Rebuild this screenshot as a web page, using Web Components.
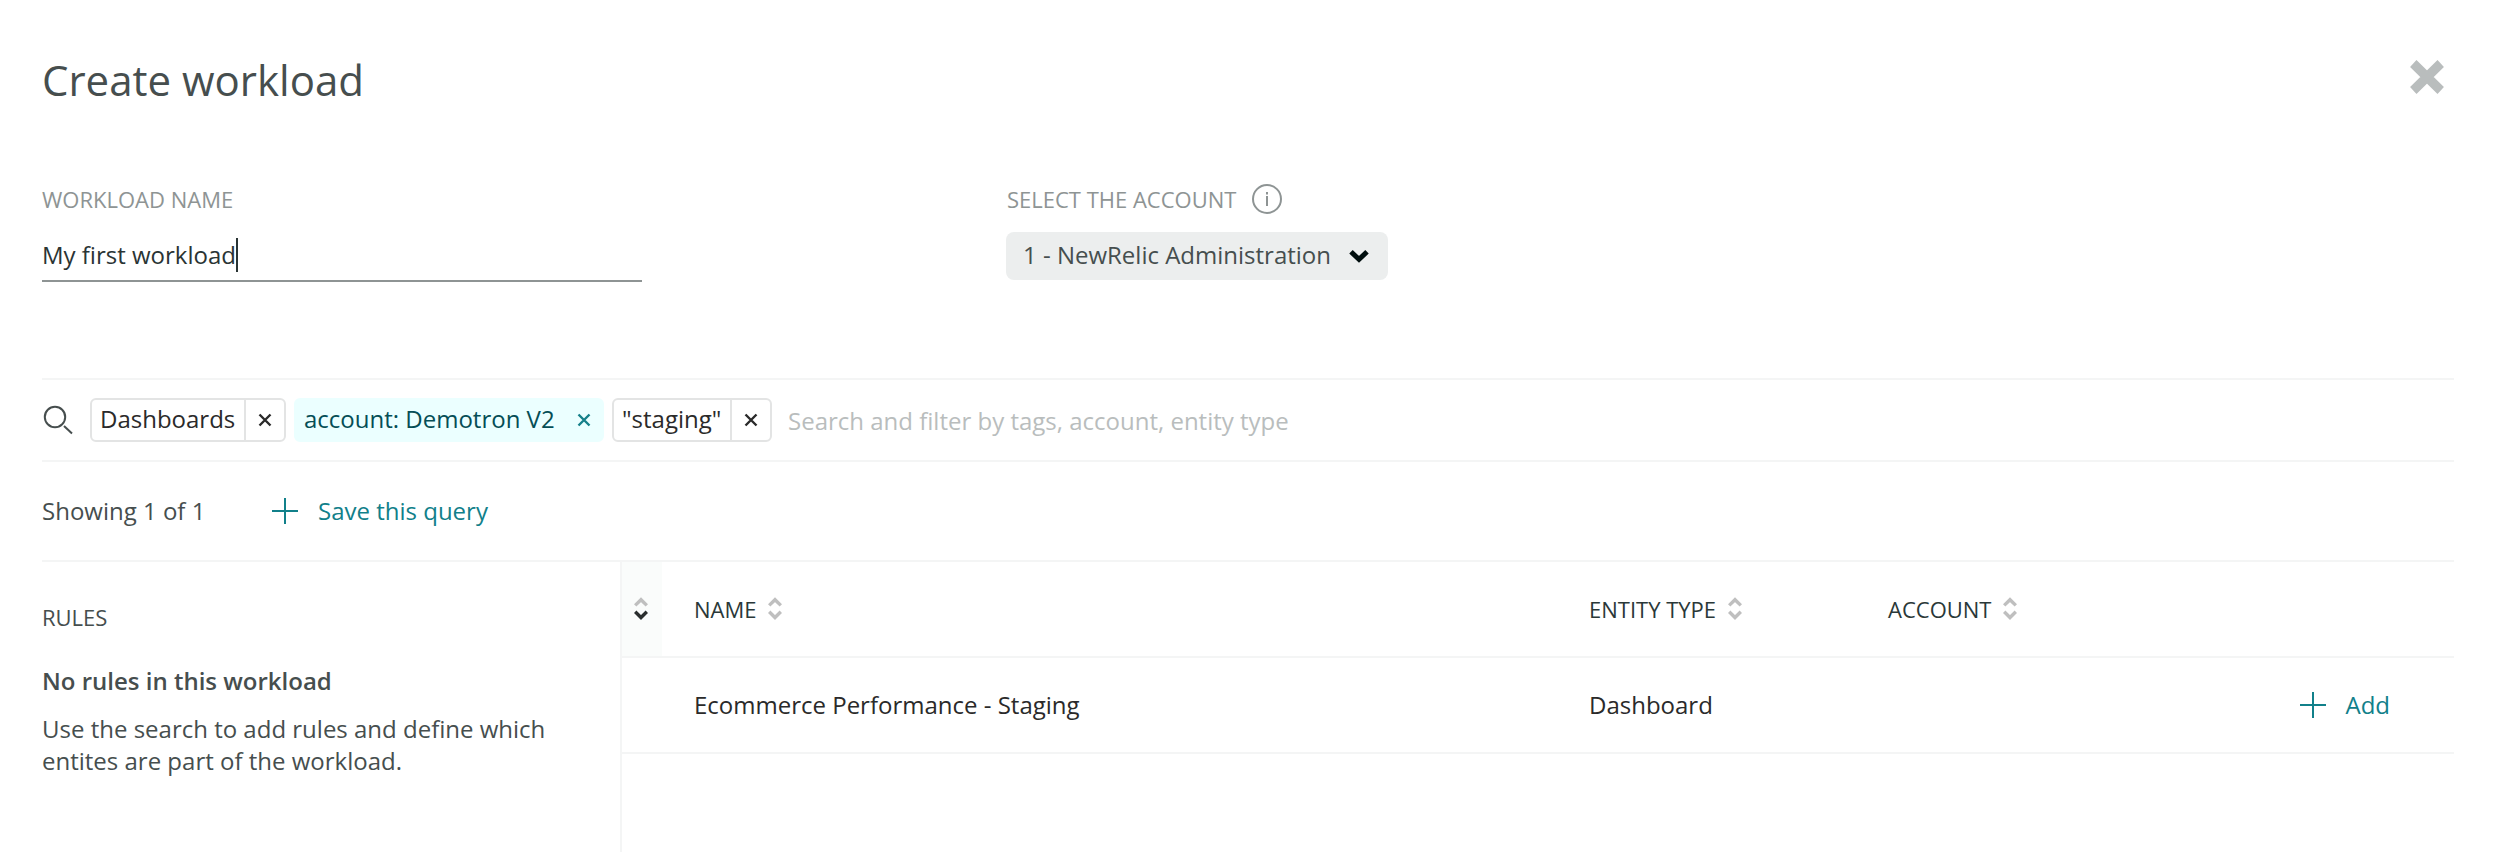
<!DOCTYPE html>
<html lang="en">
<head>
<meta charset="utf-8">
<title>Create workload</title>
<style>
  html, body { margin: 0; height: 100%; background: #fff; }
  body { overflow: hidden; font-family: "Open Sans", "Noto Sans", sans-serif; font-size: 24px; color: #464e4e; }
</style>
</head>
<body>
<workload-dialog></workload-dialog>
<script>
const define = (name, html) => customElements.define(name, class extends HTMLElement {
  constructor() {
    super();
    const t = document.createElement('template');
    t.innerHTML = html;
    this.attachShadow({ mode: 'open' }).append(t.content.cloneNode(true));
  }
});

define('close-icon', `
<style>:host{display:block;width:36px;height:36px}svg{display:block}</style>
<svg width="36" height="36" viewBox="0 0 36 36"><path d="M4 4.5L32 31.5M32 4.5L4 31.5" transform="translate(18 18) scale(.98 1) translate(-18 -18)" stroke="#b9bdbd" stroke-width="9.4"/></svg>`);

define('plus-icon', `
<style>:host{display:block;width:26px;height:26px}svg{display:block}</style>
<svg width="26" height="26"><path d="M13 0V26M0 13H26" stroke="#11808a" stroke-width="2"/></svg>`);

define('info-icon', `
<style>:host{display:block;width:30px;height:30px}svg{display:block}</style>
<svg width="30" height="30" fill="none" stroke="#8e9494"><circle cx="15" cy="15" r="14" stroke-width="2"/><path d="M15 12V22M15 8V10.4" stroke-width="2"/></svg>`);

define('search-icon', `
<style>:host{display:block;width:32px;height:32px}svg{display:block}</style>
<svg width="32" height="32" fill="none" stroke="#464e4e" stroke-width="2"><circle cx="13" cy="13" r="10.2"/><path d="M22 22L30 29.5"/></svg>`);

define('sort-icon', `
<style>:host{display:block;width:14px;height:24px;--down:#bfbfbf}:host([active]){--down:#2a2e2e}svg{display:block}</style>
<svg width="14" height="24" fill="none" stroke-width="3.4"><path d="M1.2 8.4L7 2.7L12.8 8.4" stroke="#bfbfbf"/><path d="M1.2 14.8L7 20.5L12.8 14.8" style="stroke:var(--down)"/></svg>`);

define('field-label', `
<style>:host{display:flex;align-items:center;height:32px;margin:-1px 0 17px;font-size:22px;line-height:32px;color:#8e9494;white-space:nowrap;gap:16px}</style>
<slot></slot>`);

define('text-field', `
<style>:host{display:block}
.box{display:flex;padding:6px 0 8px;border-bottom:2px solid #8e9494;line-height:34px;color:#2a3434}
i{width:2px;height:34px;background:#2a3434}</style>
<field-label><slot name="label"></slot></field-label>
<div class="box"><slot></slot><i></i></div>`);

define('select-field', `
<style>:host{display:block}
field-label{padding-left:1px}
.btn{box-sizing:border-box;width:382px;height:48px;padding:0 18px 3px 17px;border-radius:8px;background:#eceeee;display:flex;align-items:center;justify-content:space-between;white-space:nowrap}
svg{display:block;margin:2px 1px 0 0}</style>
<field-label><slot name="label"></slot><info-icon></info-icon></field-label>
<div class="btn"><slot></slot><svg width="20" height="14" fill="none"><path d="M2 2.8L10 10.4L18 2.8" stroke="#000e0e" stroke-width="5"/></svg></div>`);

define('filter-chip', `
<style>:host{box-sizing:border-box;display:flex;height:44px;border:2px solid #e3e4e4;border-radius:6px;color:#2a2a2a;line-height:40px;white-space:nowrap}
.text{flex:1;padding-left:8px;margin-top:-1px}
.x{width:38px;border-left:2px solid #e3e4e4;display:flex;align-items:center;justify-content:center}
:host([accent]){background:#ebffff;border-color:#ebffff;color:#054e56}
:host([accent]) .x{border-color:transparent;color:#16808a}
svg{display:block}
:host([accent]) svg{margin-left:1px}</style>
<div class="text"><slot></slot></div>
<div class="x"><svg width="14" height="14"><path d="M1.5 1.5L12.5 12.5M12.5 1.5L1.5 12.5" stroke="currentColor" stroke-width="2.4"/></svg></div>`);

define('search-bar', `
<style>:host{box-sizing:border-box;display:flex;align-items:center;height:84px;border:solid #f4f5f5;border-width:2px 0;gap:8px}
search-icon{margin-right:8px}
.hint{margin:0 0 0 8px;color:#b9bdbd;white-space:nowrap}</style>
<search-icon></search-icon><slot></slot><span class="hint">Search and filter by tags, account, entity type</span>`);

define('action-link', `
<style>:host{display:flex;align-items:center;gap:20px;color:#11808a;white-space:nowrap}
:host([slot]){gap:19px}
::slotted(span){margin-top:-2px}</style>
<plus-icon></plus-icon><slot></slot>`);

define('rules-panel', `
<style>:host{box-sizing:border-box;display:block;width:580px;border-right:2px solid #f4f5f5;padding-top:39px}
h2,h3,p{margin:0;line-height:32px}
h2{font-size:22px;font-weight:400}
h3{font-size:24px;font-weight:600;margin:32px 0 16px}
p{width:520px}</style>
<h2><slot name="title"></slot></h2><h3><slot name="heading"></slot></h3><p><slot></slot></p>`);

define('entity-row', `
<style>:host{display:grid;grid-template-columns:40px 927px 299px 1fr auto;height:94px;border-bottom:2px solid #f4f5f5;align-items:center;color:#2a2a2a;white-space:nowrap}
:host([header]){font-size:22px;color:#2a3838}
:host(:not([header])) .c{margin-top:-2px}
.s{box-sizing:border-box;padding-right:2px;align-self:stretch;display:flex;align-items:center;justify-content:center}
:host([header]) .s{background:#fafcfb}
.c{display:flex;align-items:center;gap:12px}
.n{padding-left:32px}
.end{padding-right:64px}</style>
<div class="s"><slot name="sort"></slot></div><div class="c n"><slot name="name"></slot></div><div class="c"><slot name="type"></slot></div><div class="c"><slot name="account"></slot></div><div class="end"><slot name="action"></slot></div>`);

define('workload-dialog', `
<style>:host{display:block;padding:50px 42px 0}
header{display:flex;justify-content:space-between;height:134px}
h1{margin:0;font-size:42px;line-height:60px;font-weight:400;white-space:nowrap}
close-icon{margin:9px 9px 0 0}
.fields{display:grid;grid-template-columns:600px 382px;column-gap:364px;margin-bottom:96px;align-items:start}
.tools{display:flex;align-items:center;height:98px;border-bottom:2px solid #f4f5f5}
.count{width:230px;margin-top:-2px;white-space:nowrap}
.main{display:flex;height:290px}
.table{flex:1}
.h{display:flex;align-items:center;gap:12px}</style>
<header><h1>Create workload</h1><close-icon></close-icon></header>
<section class="fields">
  <text-field><span slot="label">WORKLOAD NAME</span><span>My first workload</span></text-field>
  <select-field><span slot="label">SELECT THE ACCOUNT</span><span>1 - NewRelic Administration</span></select-field>
</section>
<search-bar>
  <filter-chip style="width:196px">Dashboards</filter-chip>
  <filter-chip accent style="width:310px">account: Demotron V2</filter-chip>
  <filter-chip style="width:160px">"staging"</filter-chip>
</search-bar>
<section class="tools"><span class="count">Showing 1 of 1</span><action-link><span>Save this query</span></action-link></section>
<section class="main">
  <rules-panel><span slot="title">RULES</span><span slot="heading">No rules in this workload</span>Use the search to add rules and define which entites are part of the workload.</rules-panel>
  <div class="table">
    <entity-row header>
      <sort-icon slot="sort" active></sort-icon>
      <span class="h" slot="name" style="gap:11px">NAME<sort-icon></sort-icon></span>
      <span class="h" slot="type">ENTITY TYPE<sort-icon></sort-icon></span>
      <span class="h" slot="account">ACCOUNT<sort-icon></sort-icon></span>
    </entity-row>
    <entity-row>
      <span slot="name">Ecommerce Performance - Staging</span>
      <span slot="type">Dashboard</span>
      <action-link slot="action"><span>Add</span></action-link>
    </entity-row>
  </div>
</section>`);
</script>
</body>
</html>
